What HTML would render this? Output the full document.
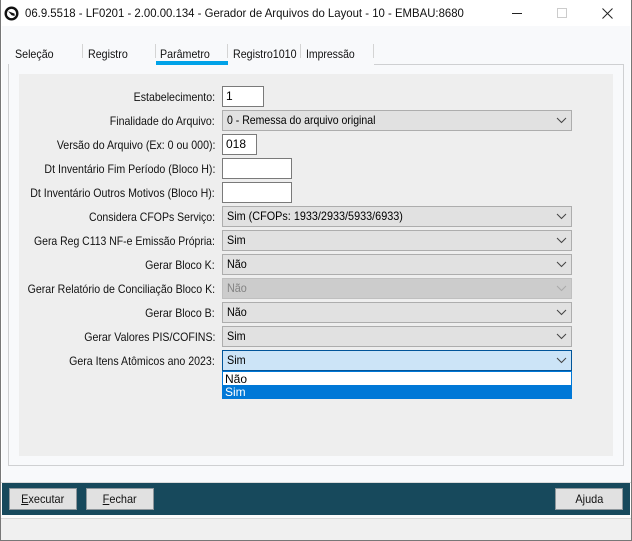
<!DOCTYPE html>
<html><head><meta charset="utf-8">
<style>
html,body{margin:0;padding:0;width:632px;height:541px;overflow:hidden;background:#fff}
body{position:relative;font-family:"Liberation Sans",sans-serif;font-size:12px;color:#000}
div,span{position:absolute;box-sizing:border-box;white-space:nowrap}
.lb{right:417px;top:0;line-height:16px;text-align:right;color:#111;transform:scaleX(.884);transform-origin:right center}
.in{left:222px;background:#fff;border:1px solid #7a7a7a;line-height:18px;padding-left:3px;font-size:12px}
.sel{left:222px;width:350px;height:21px;background:#e1e1e1;border:1px solid #adadad;line-height:19px}
.sel svg{position:absolute;right:4px;top:6px}
.sel span{left:3.6px;top:0;transform:scaleX(.9);transform-origin:left center}
.tab{top:46px;line-height:16px;color:#111;transform:scaleX(.89);transform-origin:left center}
.sep{top:44px;width:1px;height:14px;background:#d4d4d4}
.btn{top:488px;width:68px;height:22px;background:#e1e1e1;border:1px solid #8e979c;text-align:center;line-height:20px;color:#111}
.btn span{position:static;display:inline-block;transform:scaleX(.91)}
u{text-decoration:underline}
</style></head><body>
<div style="left:0;top:0;width:632px;height:26px;background:#fff"></div>
<div style="left:2px;top:26px;width:628px;height:456px;background:#f8f9fb"></div>
<div style="left:0;top:0;width:1px;height:541px;background:#777"></div>
<div style="left:631px;top:0;width:1px;height:541px;background:#777"></div>

<svg style="position:absolute;left:4px;top:6px" width="15" height="15" viewBox="0 0 15 15"><circle cx="7.5" cy="7.5" r="5.8" fill="#fff" stroke="#111" stroke-width="2.4"/><path d="M4.2 5.2L10.6 7.6L10.6 10L7.6 9.2Z" fill="#111"/></svg>
<div style="left:25px;top:5px;line-height:16px;font-size:12px;color:#111;transform:scaleX(.948);transform-origin:left center">06.9.5518 - LF0201 - 2.00.00.134 - Gerador de Arquivos do Layout - 10 - EMBAU:8680</div>
<div style="left:512px;top:13px;width:10px;height:1px;background:#222"></div>
<div style="left:557px;top:8px;width:10px;height:10px;border:1px solid #ccc"></div>
<svg style="position:absolute;left:602px;top:8px" width="11" height="11" viewBox="0 0 11 11"><path d="M.5 .5L10.5 10.5M10.5 .5L.5 10.5" stroke="#222" stroke-width="1" fill="none"/></svg>

<div class="tab" style="left:15px">Seleção</div>
<div class="tab" style="left:88px">Registro</div>
<div class="tab" style="left:160px">Parâmetro</div>
<div class="tab" style="left:233px">Registro1010</div>
<div class="tab" style="left:306px;transform:scaleX(.87)">Impressão</div>
<div class="sep" style="left:82px"></div>
<div class="sep" style="left:155px"></div>
<div class="sep" style="left:227px"></div>
<div class="sep" style="left:300px"></div>
<div class="sep" style="left:373px"></div>
<div style="left:156px;top:61px;width:72px;height:4px;background:#00a2e8"></div>

<div style="left:8px;top:64px;width:1px;height:402px;background:#cfd0d2"></div>
<div style="left:623px;top:64px;width:1px;height:402px;background:#cfd0d2"></div>
<div style="left:374px;top:64px;width:250px;height:1px;background:#cfd0d2"></div>
<div style="left:8px;top:465px;width:616px;height:1px;background:#cfd0d2"></div>
<div style="left:19px;top:74px;width:594px;height:382px;background:#eee"></div>

<div class="lb" style="top:89px">Estabelecimento:</div>
<div class="lb" style="top:113px">Finalidade do Arquivo:</div>
<div class="lb" style="top:137px">Versão do Arquivo (Ex: 0 ou 000):</div>
<div class="lb" style="top:161px">Dt Inventário Fim Período (Bloco H):</div>
<div class="lb" style="top:185px">Dt Inventário Outros Motivos (Bloco H):</div>
<div class="lb" style="top:209px;transform:scaleX(.875)">Considera CFOPs Serviço:</div>
<div class="lb" style="top:233px;transform:scaleX(.87)">Gera Reg C113 NF-e Emissão Própria:</div>
<div class="lb" style="top:257px">Gerar Bloco K:</div>
<div class="lb" style="top:281px">Gerar Relatório de Conciliação Bloco K:</div>
<div class="lb" style="top:305px">Gerar Bloco B:</div>
<div class="lb" style="top:329px">Gerar Valores PIS/COFINS:</div>
<div class="lb" style="top:353px">Gera Itens Atômicos ano 2023:</div>

<div class="in" style="top:86px;width:42px;height:21px">1</div>
<div class="in" style="top:134px;width:35px;height:21px">018</div>
<div class="in" style="top:158px;width:70px;height:21px"></div>
<div class="in" style="top:182px;width:70px;height:21px"></div>

<div class="sel" style="top:110px"><span style="transform:scaleX(.876)">0 - Remessa do arquivo original</span><svg width="11" height="7" viewBox="0 0 11 7"><path d="M1 1L5.5 5.5L10 1" fill="none" stroke="#444" stroke-width="1"/></svg></div>
<div class="sel" style="top:206px"><span style="transform:scaleX(.903)">Sim (CFOPs: 1933/2933/5933/6933)</span><svg width="11" height="7" viewBox="0 0 11 7"><path d="M1 1L5.5 5.5L10 1" fill="none" stroke="#444" stroke-width="1"/></svg></div>
<div class="sel" style="top:230px"><span>Sim</span><svg width="11" height="7" viewBox="0 0 11 7"><path d="M1 1L5.5 5.5L10 1" fill="none" stroke="#444" stroke-width="1"/></svg></div>
<div class="sel" style="top:254px"><span>Não</span><svg width="11" height="7" viewBox="0 0 11 7"><path d="M1 1L5.5 5.5L10 1" fill="none" stroke="#444" stroke-width="1"/></svg></div>
<div class="sel" style="top:278px;background:#ccc;border-color:#bfbfbf;color:#838383"><span>Não</span><svg width="11" height="7" viewBox="0 0 11 7"><path d="M1 1L5.5 5.5L10 1" fill="none" stroke="#aaa" stroke-width="1"/></svg></div>
<div class="sel" style="top:302px"><span>Não</span><svg width="11" height="7" viewBox="0 0 11 7"><path d="M1 1L5.5 5.5L10 1" fill="none" stroke="#444" stroke-width="1"/></svg></div>
<div class="sel" style="top:326px"><span>Sim</span><svg width="11" height="7" viewBox="0 0 11 7"><path d="M1 1L5.5 5.5L10 1" fill="none" stroke="#444" stroke-width="1"/></svg></div>
<div class="sel" style="top:350px;background:#cce4f7;border-color:#005499"><span>Sim</span><svg width="11" height="7" viewBox="0 0 11 7"><path d="M1 1L5.5 5.5L10 1" fill="none" stroke="#444" stroke-width="1"/></svg></div>

<div style="left:222px;top:371px;width:350px;height:28px;background:#fff;border:1px solid #0078d7;border-bottom:0"></div>
<div style="left:225px;top:372px;line-height:15px;font-size:12px">Não</div>
<div style="left:222px;top:385px;width:350px;height:14px;background:#0078d7;color:#fff;line-height:15px;padding-left:3px;font-size:12px">Sim</div>

<div style="left:1px;top:482px;width:630px;height:1px;background:#d9dadb"></div>
<div style="left:2px;top:483px;width:628px;height:32px;background:#17495c"></div>
<div class="btn" style="left:9px"><span><u>E</u>xecutar</span></div>
<div class="btn" style="left:86px"><span><u>F</u>echar</span></div>
<div class="btn" style="left:555px"><span>Ajuda</span></div>
<div style="left:1px;top:515px;width:630px;height:3px;background:#fbfbfb"></div>
<div style="left:1px;top:518px;width:630px;height:22px;background:#f0f0f0;border-top:1px solid #d9d9d9"></div>
<div style="left:0;top:540px;width:632px;height:1px;background:#777"></div>
</body></html>
